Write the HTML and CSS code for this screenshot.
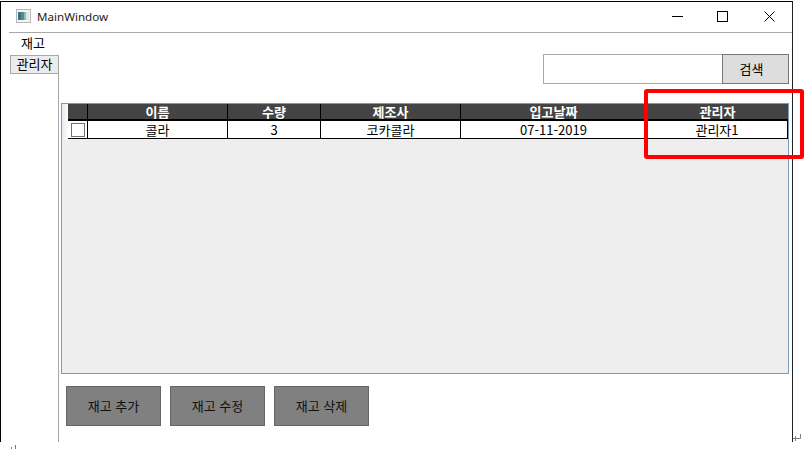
FILE: index.html
```html
<!DOCTYPE html>
<html lang="ko">
<head>
    <meta charset="UTF-8">
    <title>MainWindow</title>
    <link rel="stylesheet" href="styles.css">
</head>
<body>
    <div class="window">
        <div class="titlebar">
            <svg class="app-icon" width="15" height="14" viewBox="0 0 15 14">
                <rect x="0.5" y="0.5" width="14" height="13" fill="#f4f4f4" stroke="#b4b4b4"/>
                <rect x="2" y="3" width="3" height="8" fill="#3d6f8f"/>
                <rect x="5" y="3" width="3" height="8" fill="#3f9a7c"/>
                <rect x="8" y="3" width="2" height="8" fill="#8fb8c8"/>
                <rect x="10" y="3" width="3" height="8" fill="#e2e6e6"/>
            </svg>
            <span class="title">MainWindow</span>
            <div class="caption">
                <svg width="11" height="11" viewBox="0 0 11 11"><path d="M0 5.5H11" stroke="#000"/></svg>
                <svg width="11" height="11" viewBox="0 0 11 11"><rect x="0.5" y="0.5" width="10" height="10" fill="none" stroke="#000"/></svg>
                <svg width="11" height="11" viewBox="0 0 11 11"><path d="M0.5 0.5L10.5 10.5M10.5 0.5L0.5 10.5" stroke="#000"/></svg>
            </div>
        </div>
        <div class="content">
            <div class="sidebar">
                <div class="menu-item">재고</div>
                <div class="tabs">
                    <div class="tab">관리자</div>
                </div>
            </div>
            <div class="main">
                <div class="search">
                    <div class="search-input"></div>
                    <div class="search-btn">검색</div>
                </div>
                <div class="panel">
                    <div class="row-stripe"></div>
                    <div class="grid">
                        <div class="head first"></div>
                        <div class="head">이름</div>
                        <div class="head">수량</div>
                        <div class="head">제조사</div>
                        <div class="head">입고날짜</div>
                        <div class="head last">관리자</div>
                        <div class="cell first"><span class="check"></span></div>
                        <div class="cell">콜라</div>
                        <div class="cell">3</div>
                        <div class="cell">코카콜라</div>
                        <div class="cell">07-11-2019</div>
                        <div class="cell last">관리자1</div>
                    </div>
                </div>
                <div class="actions">
                    <div class="action">재고 추가</div>
                    <div class="action">재고 수정</div>
                    <div class="action">재고 삭제</div>
                </div>
            </div>
        </div>
    </div>
    <div class="highlight"></div>
    <svg class="mark-left" width="8" height="4" viewBox="0 0 8 4"><path d="M0.5 2V4M4.5 0V4" stroke="#777"/></svg>
    <svg class="mark-return" width="9" height="8" viewBox="0 0 9 8"><path d="M0 4.5H7.5V0M2.5 2V7" fill="none" stroke="#808080"/></svg>
</body>
</html>
```

FILE: styles.css
```css
html, body {
    height: 100%;
}
body {
    margin: 0;
    background: #fff;
    color: #000;
    font-family: "Noto Sans CJK KR", "Noto Sans", sans-serif;
    font-size: 13px;
    overflow: hidden;
}
.window {
    box-sizing: border-box;
    width: 793px;
    height: 441px;
    margin-top: 1px;
    border-top: 1px solid #000;
    border-left: 1px solid #000;
    border-right: 1px solid #222;
    display: flex;
    flex-direction: column;
}
.titlebar {
    box-sizing: border-box;
    height: 30px;
    display: flex;
    align-items: center;
    padding: 0 0 2px 15px;
    flex-shrink: 0;
}
.app-icon {
    margin-right: 6px;
}
.title {
    color: #222;
    font-family: "Noto Sans", sans-serif;
    font-size: 11.6px;
}
.caption {
    margin-left: auto;
    display: flex;
    gap: 35px;
    padding-right: 17px;
}
.caption svg:nth-child(2) {
    margin-left: -1px;
}
.caption svg:nth-child(3) {
    margin-left: 1px;
}
.content {
    flex: 1;
    display: flex;
    margin-left: 8px;
    border-top: 1px solid #a8a8a8;
    min-height: 0;
}
.sidebar {
    width: 50px;
    flex-shrink: 0;
    display: flex;
    flex-direction: column;
}
.menu-item {
    height: 22px;
    line-height: 20px;
    padding-left: 12px;
    box-sizing: border-box;
}
.tabs {
    flex: 1;
    border-right: 1px solid #a8a8a8;
}
.tab {
    box-sizing: border-box;
    height: 19px;
    line-height: 16px;
    text-align: center;
    background: #ececec;
    border: 1px solid #a8a8a8;
    border-right: none;
    margin-left: 1px;
}
.main {
    flex: 1;
    display: flex;
    flex-direction: column;
    padding: 21px 3px 0 2px;
    min-width: 0;
}
.search {
    display: flex;
    justify-content: flex-end;
    height: 30px;
}
.search-input {
    box-sizing: border-box;
    width: 179px;
    border: 1px solid #a8a8a8;
    border-right: none;
    background: #fff;
}
.search-btn {
    box-sizing: border-box;
    width: 67px;
    padding-right: 8px;
    border: 1px solid #777;
    background: #ddd;
    text-align: center;
    line-height: 28px;
}
.panel {
    box-sizing: border-box;
    height: 271px;
    margin-top: 19px;
    border: 1px solid #7a9ab8;
    background: #eee;
    display: flex;
    align-items: flex-start;
}
.row-stripe {
    width: 6px;
    height: 36px;
    background: linear-gradient(90deg, #e6ecf4, #fbfbfb);
    flex-shrink: 0;
}
.grid {
    flex: 1;
    display: grid;
    grid-template-columns: 20px 140px 93px 140px 1fr 141px;
    grid-template-rows: 17px 18px;
}
.head {
    background: #444;
    color: #fff;
    font-weight: bold;
    text-align: center;
    line-height: 15px;
    border-bottom: 2px solid #000;
    border-right: 1px solid #000;
    box-sizing: border-box;
}
.head.last {
    border-right: none;
}
.cell {
    background: #fff;
    text-align: center;
    line-height: 17px;
    border-bottom: 1px solid #000;
    border-right: 1px solid #000;
    box-sizing: border-box;
}
.cell.first {
    display: flex;
    align-items: center;
    justify-content: center;
}
.check {
    box-sizing: border-box;
    width: 14px;
    height: 14px;
    border: 1px solid #707070;
    background: #fff;
}
.actions {
    display: flex;
    gap: 9px;
    margin: 12px 0 0 5px;
}
.action {
    box-sizing: border-box;
    width: 95px;
    height: 40px;
    border: 1px solid #666;
    background: #808080;
    text-align: center;
    line-height: 38px;
    color: #111;
}
.highlight {
    position: absolute;
    left: 644px;
    top: 89px;
    width: 160px;
    height: 70px;
    box-sizing: border-box;
    border: 4px solid #f00;
    border-radius: 3px;
}
.mark-left {
    position: absolute;
    left: 11px;
    top: 445px;
}
.mark-return {
    position: absolute;
    left: 793px;
    top: 434px;
}
```
